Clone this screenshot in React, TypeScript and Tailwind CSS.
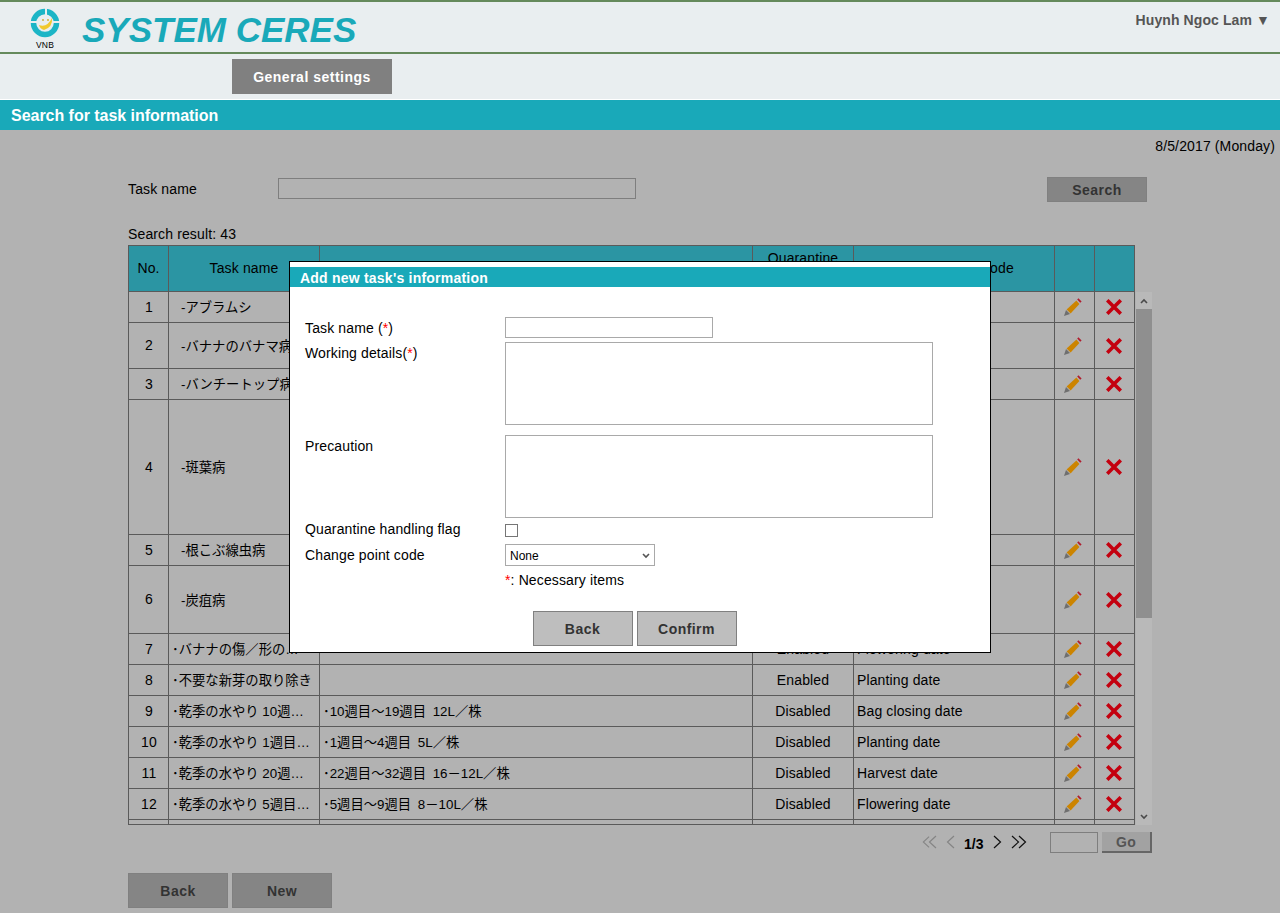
import React from 'react';

const FONT = "font-['Liberation_Sans','Noto_Sans_CJK_JP',sans-serif]";

type Row = { no: number; h: string; name: string; detail?: string; flag?: string; code?: string; indent?: boolean };

const ROWS: Row[] = [
  { no: 1, h: 'h-[31px]', name: '-アブラムシ', indent: true },
  { no: 2, h: 'h-[46px]', name: '-バナナのバナマ病', indent: true },
  { no: 3, h: 'h-[31px]', name: '-バンチートップ病', indent: true },
  { no: 4, h: 'h-[135px]', name: '-斑葉病', indent: true },
  { no: 5, h: 'h-[31px]', name: '-根こぶ線虫病', indent: true },
  { no: 6, h: 'h-[68px]', name: '-炭疽病', indent: true },
  { no: 7, h: 'h-[31px]', name: '･バナナの傷／形の…', flag: 'Enabled', code: 'Flowering date' },
  { no: 8, h: 'h-[31px]', name: '･不要な新芽の取り除き', flag: 'Enabled', code: 'Planting date' },
  { no: 9, h: 'h-[31px]', name: '･乾季の水やり 10週…', detail: '･10週目〜19週目 12L／株', flag: 'Disabled', code: 'Bag closing date' },
  { no: 10, h: 'h-[31px]', name: '･乾季の水やり 1週目…', detail: '･1週目〜4週目 5L／株', flag: 'Disabled', code: 'Planting date' },
  { no: 11, h: 'h-[31px]', name: '･乾季の水やり 20週…', detail: '･22週目〜32週目 16－12L／株', flag: 'Disabled', code: 'Harvest date' },
  { no: 12, h: 'h-[31px]', name: '･乾季の水やり 5週目…', detail: '･5週目〜9週目 8－10L／株', flag: 'Disabled', code: 'Flowering date' },
  { no: 13, h: 'h-[31px]', name: '' },
];

const Logo = () => (
  <div className="flex w-[30px] flex-col items-center">
    <svg width="30" height="30" viewBox="0 0 30 30">
      <circle cx="15" cy="15" r="11.5" fill="none" stroke="#1cb5c6" strokeWidth="5.5" />
      <rect x="0" y="13" width="7" height="2" fill="#e9eef0" />
      <rect x="23" y="13" width="7" height="2" fill="#e9eef0" />
      <rect x="15" y="0" width="2" height="7" fill="#e9eef0" />
      <path d="M9 17 Q17 20 22 10 Q23 19 14 22 Q10 21 9 17 Z" fill="#f1c92e" />
      <circle cx="13" cy="12" r="0.9" fill="#c9a92a" />
      <circle cx="18" cy="12" r="0.9" fill="#c9a92a" />
    </svg>
    <span className="mt-[2px] text-[8.5px] leading-[10px] text-black">VNB</span>
  </div>
);

const Pencil = () => (
  <svg width="20" height="20" viewBox="0 0 20 20">
    <path d="M1 19 L3 13 L7 17 Z" fill="#6f6f6f" />
    <path d="M3.6 12.4 L13.4 3.6 L16.4 7 L7.6 16.4 Z" fill="#cc8400" />
    <path d="M14.2 2.6 L15.4 1.2 L18.6 4.4 L17.2 5.8 Z" fill="#b01c2e" />
  </svg>
);

const Cross = () => (
  <svg width="16" height="16" viewBox="0 0 16 16">
    <path d="M2.5 2.5 L13.5 13.5 M13.5 2.5 L2.5 13.5" stroke="#c4000f" strokeWidth="3.6" strokeLinecap="square" />
  </svg>
);

const Chevron = ({ dir, color }: { dir: 'l' | 'r'; color: string }) => (
  <svg width="9" height="14" viewBox="0 0 9 14" fill="none" stroke={color} strokeWidth="1.2">
    <path d={dir === 'l' ? 'M8 1 L1.5 7 L8 13' : 'M1 1 L7.5 7 L1 13'} />
  </svg>
);

const ActionButton = ({ label, className }: { label: string; className: string }) => (
  <button className={`border border-[#808080] pt-[2px] font-bold tracking-[0.45px] text-[#333] ${className}`}>{label}</button>
);

export default function App() {
  return (
    <div className={`relative h-[913px] w-[1280px] overflow-hidden bg-[#b2b2b2] text-[14px] tracking-[0.13px] text-black ${FONT}`}>
      {/* header */}
      <header className="flex h-[54px] items-start border-y-2 border-[#658a5c] bg-[#e9eef0]">
        <div className="ml-[30px] mt-[6px]"><Logo /></div>
        <h1 className="ml-[22px] mt-[6px] text-[35px] font-bold italic leading-[44px] tracking-normal text-[#19a9b9]">SYSTEM CERES</h1>
        <div className="ml-auto mr-[10px] mt-[8px] font-bold tracking-[0.1px] text-[#555]">Huynh Ngoc Lam ▼</div>
      </header>
      <nav className="h-[46px] border-b border-white bg-[#e9eef0] pl-[232px] pt-[5px]">
        <button className="h-[35px] w-[160px] bg-[#808080] pt-[2px] font-bold tracking-[0.5px] text-white">General settings</button>
      </nav>
      <div className="h-[30px] bg-[#19a9b9] pl-[11px] pt-px text-[16px] font-bold leading-[30px] tracking-[-0.03px] text-white">Search for task information</div>

      {/* content */}
      <main>
        <div className="mr-[5px] mt-[7px] h-[18px] text-right leading-[18px]">8/5/2017 (Monday)</div>
        <div className="ml-[128px] mr-[133px] mt-[22px] flex h-[25px] items-center">
          <span className="w-[150px]">Task name</span>
          <div className="mb-[2px] h-[21px] w-[358px] border border-[#7e7e7e]" />
          <ActionButton label="Search" className="ml-auto h-[25px] w-[100px] bg-[#858585]" />
        </div>
        <div className="ml-[128px] mt-[22px] h-[21px] leading-[20px]">Search result: 43</div>

        <div className="ml-[128px] w-[1024px]">
          <table className="w-[1007px] table-fixed border-collapse border border-[#5a5a5a] bg-[#2b95a3]">
            <colgroup>
              <col className="w-[40px]" /><col className="w-[151px]" /><col className="w-[433px]" /><col className="w-[101px]" /><col className="w-[201px]" /><col className="w-[40px]" /><col className="w-[40px]" />
            </colgroup>
            <thead>
              <tr className="h-[46px] text-center font-normal">
                <th className="border border-[#5a5a5a] font-normal">No.</th>
                <th className="border border-[#5a5a5a] font-normal">Task name</th>
                <th className="border border-[#5a5a5a] font-normal">Working details</th>
                <th className="border border-[#5a5a5a] font-normal">Quarantine handling</th>
                <th className="border border-[#5a5a5a] font-normal">Change point code</th>
                <th className="border border-[#5a5a5a]" />
                <th className="border border-[#5a5a5a]" />
              </tr>
            </thead>
          </table>
          <div className="flex">
            <div className="h-[533px] w-[1007px] overflow-hidden border-b border-[#5a5a5a]">
              <table className="-mt-px w-[1007px] table-fixed border-collapse">
                <colgroup>
                  <col className="w-[40px]" /><col className="w-[151px]" /><col className="w-[433px]" /><col className="w-[101px]" /><col className="w-[201px]" /><col className="w-[40px]" /><col className="w-[40px]" />
                </colgroup>
                <tbody>
                  {ROWS.map((r) => (
                    <tr key={r.no} className={r.h}>
                      <td className="border border-[#5a5a5a] pl-px text-center">{r.no}</td>
                      <td className={`whitespace-nowrap border border-[#5a5a5a] pt-[2px] text-[13.33px] tracking-normal ${r.indent ? 'pl-[12px]' : 'pl-[3px]'}`}>{r.name}</td>
                      <td className="whitespace-nowrap border border-[#5a5a5a] pl-[3px] pt-[2px] text-[13.33px] tracking-normal [word-spacing:3px]">{r.detail}</td>
                      <td className="border border-[#5a5a5a] text-center">{r.flag}</td>
                      <td className="border border-[#5a5a5a] pl-[3px]">{r.code}</td>
                      <td className="border border-[#5a5a5a]"><div className="flex justify-center pr-[3px]"><Pencil /></div></td>
                      <td className="border border-[#5a5a5a]"><div className="flex justify-center pr-px"><Cross /></div></td>
                    </tr>
                  ))}
                </tbody>
              </table>
            </div>
            {/* scrollbar */}
            <div className="ml-px flex h-[533px] w-[16px] flex-col bg-[#b9b9b9]">
              <div className="flex h-[17px] items-center justify-center">
                <svg width="8" height="6" viewBox="0 0 8 6" fill="none" stroke="#4a4a4a" strokeWidth="1.6"><path d="M1 5 L4 2 L7 5" /></svg>
              </div>
              <div className="h-[309px] bg-[#8f8f8f]" />
              <div className="mt-auto flex h-[17px] items-center justify-center">
                <svg width="8" height="6" viewBox="0 0 8 6" fill="none" stroke="#4a4a4a" strokeWidth="1.6"><path d="M1 1 L4 4 L7 1" /></svg>
              </div>
            </div>
          </div>
          {/* pager */}
          <div className="mt-[6px] flex h-[22px] items-center">
            <div className="ml-[794px] flex w-[15px]"><Chevron dir="l" color="#858585" /><span className="-ml-[2px]"><Chevron dir="l" color="#858585" /></span></div>
            <div className="ml-[9px]"><Chevron dir="l" color="#858585" /></div>
            <span className="ml-[9px] w-[20px] pt-[4px] font-bold tracking-normal">1/3</span>
            <div className="ml-[9px]"><Chevron dir="r" color="#111" /></div>
            <div className="ml-[9px] flex"><Chevron dir="r" color="#111" /><span className="-ml-[2px]"><Chevron dir="r" color="#111" /></span></div>
            <div className="ml-[23px] h-[21px] w-[48px] border border-[#7e7e7e]" />
            <button className="ml-[4px] h-[21px] w-[50px] border-b-2 border-r-2 border-[#666] bg-[#a2a2a2] font-bold tracking-[0.3px] text-[#555]">Go</button>
          </div>
        </div>

        <div className="ml-[128px] mt-[20px] flex gap-[4px]">
          <ActionButton label="Back" className="h-[35px] w-[100px] bg-[#858585]" />
          <ActionButton label="New" className="h-[35px] w-[100px] bg-[#858585]" />
        </div>
      </main>

      {/* modal */}
      <div className="absolute left-[289px] top-[261px] h-[392px] w-[702px] border border-black bg-white pt-[5px]">
        <div className="h-[20px] bg-[#19a9b9] pl-[10px] pt-px font-bold leading-[20px] tracking-[0.22px] text-white">Add new task's information</div>
        <div className="px-[15px] pt-[30px]">
          <div className="flex h-[21px] items-center">
            <span className="w-[200px] pt-[2px]">Task name (<span className="text-[#ff0000]">*</span>)</span>
            <div className="h-[21px] w-[208px] border border-[#a9a9a9]" />
          </div>
          <div className="mt-[4px] flex">
            <span className="w-[200px] leading-[22px]">Working details(<span className="text-[#ff0000]">*</span>)</span>
            <div className="h-[83px] w-[428px] border border-[#a9a9a9]" />
          </div>
          <div className="mt-[10px] flex">
            <span className="w-[200px] leading-[22px]">Precaution</span>
            <div className="h-[83px] w-[428px] border border-[#a9a9a9]" />
          </div>
          <div className="mt-[4px] flex h-[17px] items-center">
            <span className="mb-[2px] w-[200px]">Quarantine handling flag</span>
            <div className="h-[13px] w-[13px] border border-[#767676]" />
          </div>
          <div className="mt-[5px] flex h-[22px] items-center">
            <span className="w-[200px]">Change point code</span>
            <div className="flex h-[22px] w-[150px] items-center justify-between border border-[#a9a9a9] px-[4px] pt-px text-[12px] tracking-normal">
              None
              <svg width="8" height="6" viewBox="0 0 8 6" fill="none" stroke="#555" strokeWidth="1.6"><path d="M1 1 L4 4 L7 1" /></svg>
            </div>
          </div>
          <div className="ml-[200px] mt-[4px] h-[20px] leading-[20px]"><span className="text-[#ff0000]">*</span>: Necessary items</div>
          <div className="mt-[21px] flex justify-center gap-[4px] pr-[11px]">
            <ActionButton label="Back" className="h-[35px] w-[100px] bg-[#bebebe]" />
            <ActionButton label="Confirm" className="h-[35px] w-[100px] bg-[#bebebe]" />
          </div>
        </div>
      </div>
    </div>
  );
}
